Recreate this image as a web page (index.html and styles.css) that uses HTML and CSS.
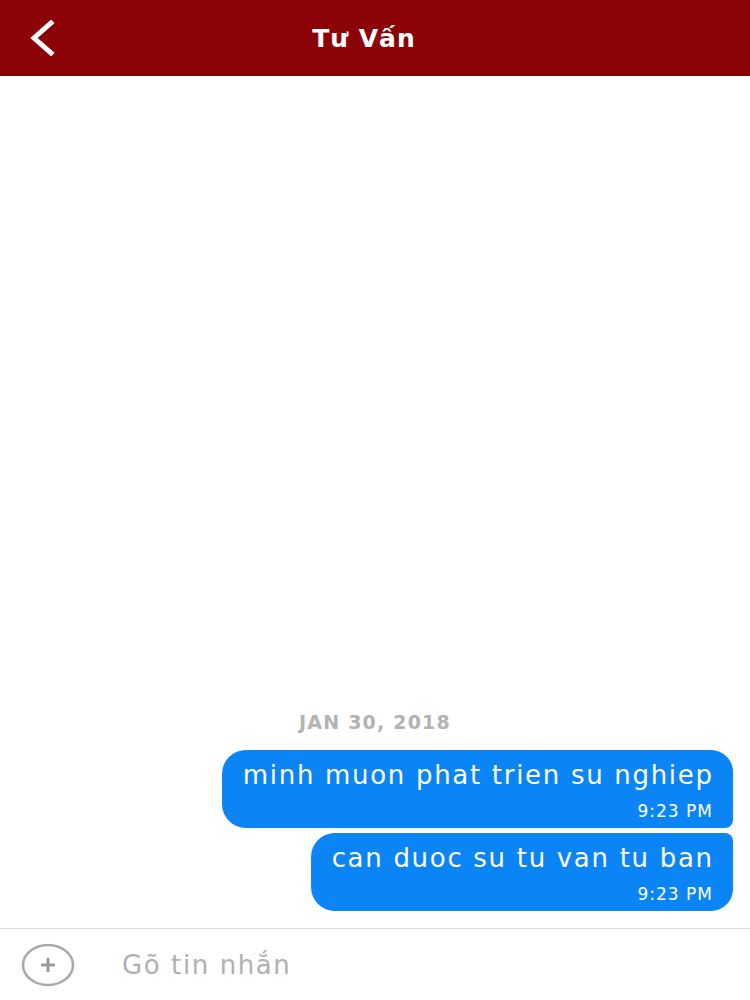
FILE: index.html
```html
<!DOCTYPE html>
<html lang="vi">
<head>
<meta charset="utf-8">
<link rel="stylesheet" href="styles.css">
</head>
<body>
<div class="app">
  <header class="topbar">
    <button class="back" aria-label="back">
      <svg width="30" height="36" viewBox="0 0 30 36"><path d="M24 3 L7 18 L24 33" fill="none" stroke="#fff" stroke-width="5" stroke-linecap="square" stroke-linejoin="miter"/></svg>
    </button>
    <h1 class="title">Tư Vấn</h1>
  </header>
  <main class="thread">
    <div class="date">JAN 30, 2018</div>
    <div class="bubble first">
      <div class="text">minh muon phat trien su nghiep</div>
      <div class="time">9:23 PM</div>
    </div>
    <div class="bubble last">
      <div class="text">can duoc su tu van tu ban</div>
      <div class="time">9:23 PM</div>
    </div>
  </main>
  <footer class="composer">
    <div class="plus">
      <svg width="54" height="44" viewBox="0 0 54 44"><ellipse cx="27" cy="22" rx="25" ry="20" fill="none" stroke="#a8a8a8" stroke-width="2.5"/><path d="M27 15 V29 M20 22 H34" stroke="#9a9a9a" stroke-width="3"/></svg>
    </div>
    <div class="placeholder">Gõ tin nhắn</div>
  </footer>
</div>
</body>
</html>
```
FILE: styles.css
```css
html, body { margin: 0; padding: 0; background: #fff; }
body { font-family: "DejaVu Sans", "Liberation Sans", sans-serif; }
.app { width: 750px; height: 1000px; display: flex; flex-direction: column; }
.topbar {
  height: 76px; flex: none; background: #8c0307;
  display: flex; align-items: center; justify-content: center; position: relative;
}
.back { position: absolute; left: 27px; top: 20px; background: none; border: 0; padding: 0; }
.title { margin: 0; color: #fff; font-family: "DejaVu Sans", sans-serif; font-weight: 700; font-size: 25px; letter-spacing: 1px; margin-left: -22px; }
.thread { flex: 1; display: flex; flex-direction: column; align-items: flex-end; justify-content: flex-end; padding: 0 17px 17px 0; }
.date { align-self: center; margin-right: -17px; color: #b3b3b3; font-weight: 700; font-size: 19px; letter-spacing: 1.2px; margin-bottom: 17px; }
.bubble { background: #0b84f6; color: #fff; padding: 8px 21px 8px 21px; text-align: right; box-sizing: border-box; height: 78px; }
.bubble.first { border-radius: 24px 22px 8px 24px; margin-bottom: 5px; }
.bubble.last { border-radius: 24px 8px 22px 24px; }
.text { font-size: 26px; line-height: 34px; letter-spacing: 1.7px; margin-right: -1.7px; }
.time { font-size: 17px; line-height: 20px; margin-top: 9px; letter-spacing: 1px; margin-right: -1px; }
.composer { height: 71px; flex: none; border-top: 1.5px solid #d9d9d9; display: flex; align-items: center; }
.plus { margin-left: 21px; width: 54px; height: 44px; }
.placeholder { margin-left: 47px; color: #b0b0b0; font-size: 26px; letter-spacing: 1.6px; }
```
